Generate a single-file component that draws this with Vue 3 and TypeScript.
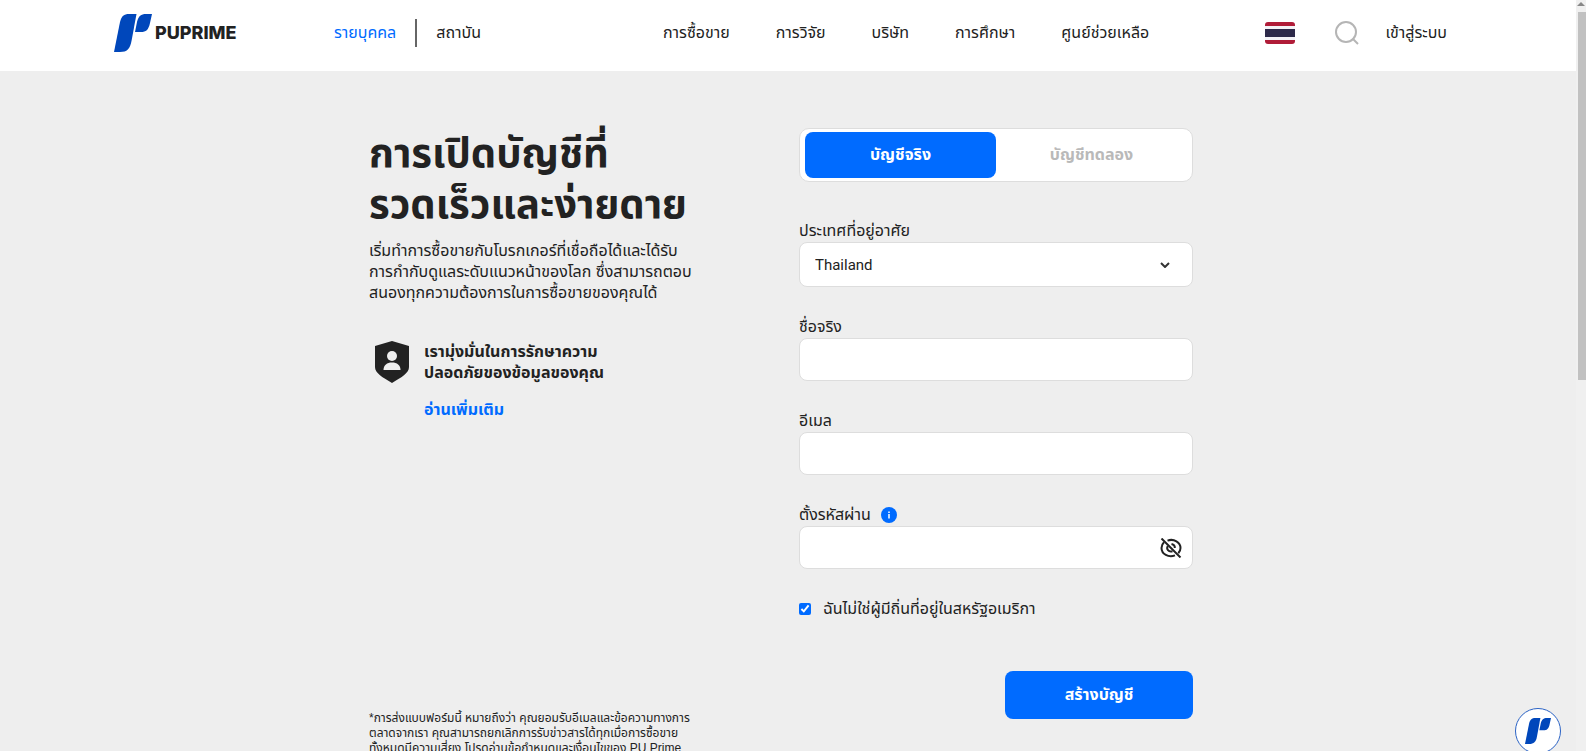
<script setup lang="ts">
import { ref } from 'vue'

const menu: string[] = ['การซื้อขาย', 'การวิจัย', 'บริษัท', 'การศึกษา', 'ศูนย์ช่วยเหลือ']

const account = ref<'live' | 'demo'>('live')
const country = ref('Thailand')
const firstName = ref('')
const email = ref('')
const password = ref('')
const showPassword = ref(false)
const notUsResident = ref(true)
</script>

<template>
  <div class="shell">
    <div class="page">
      <header class="topbar">
        <a class="logo" href="#" aria-label="PUPRIME">
          <svg class="mark" viewBox="0 0 38 38" aria-hidden="true">
            <path d="M15 0H22.500L17.500 27C16 35 13 38 6 38H0L6 8C7.500 2 10 0 15 0Z" />
            <path d="M32 0H38L36 9C34.500 16 32 18 27 18H21L23 8C24.500 2 27 0 32 0Z" />
          </svg>
          <span class="wordmark">PUPRIME</span>
        </a>
        <nav class="segment">
          <a class="current" href="#">รายบุคคล</a>
          <a href="#">สถาบัน</a>
        </nav>
        <nav class="menu">
          <a v-for="item in menu" :key="item" href="#">{{ item }}</a>
        </nav>
        <div class="tools">
          <button class="flag" type="button" aria-label="ไทย"></button>
          <button class="search" type="button" aria-label="ค้นหา">
            <svg viewBox="0 0 24 24" aria-hidden="true">
              <circle cx="11" cy="11" r="10" />
              <path d="M17.500 17.500L23 23" />
            </svg>
          </button>
          <a class="login" href="#">เข้าสู่ระบบ</a>
        </div>
      </header>

      <main class="content">
        <section class="intro">
          <h1>การเปิดบัญชีที่<br />รวดเร็วและง่ายดาย</h1>
          <p class="lead">
            เริ่มทำการซื้อขายกับโบรกเกอร์ที่เชื่อถือได้และได้รับ<br />
            การกำกับดูแลระดับแนวหน้าของโลก ซึ่งสามารถตอบ<br />
            สนองทุกความต้องการในการซื้อขายของคุณได้
          </p>
          <div class="privacy">
            <svg class="shield" viewBox="0 0 34 42" aria-hidden="true">
              <path d="M17 0L34 5V26C34 32 27 36 17 42C7 36 0 32 0 26V5Z" fill="#222" />
              <circle cx="17" cy="15" r="5" fill="#eee" />
              <path d="M8.500 29C8.500 24 12 21.500 17 21.500S25.500 24 25.500 29Z" fill="#eee" />
            </svg>
            <div>
              <p class="pledge">เรามุ่งมั่นในการรักษาความ<br />ปลอดภัยของข้อมูลของคุณ</p>
              <a class="more" href="#">อ่านเพิ่มเติม</a>
            </div>
          </div>
          <p class="note">
            *การส่งแบบฟอร์มนี้ หมายถึงว่า คุณยอมรับอีเมลและข้อความทางการ<br />
            ตลาดจากเรา คุณสามารถยกเลิกการรับข่าวสารได้ทุกเมื่อการซื้อขาย<br />
            ทั้งหมดมีความเสี่ยง โปรดอ่านข้อกำหนดและเงื่อนไขของ PU Prime
          </p>
        </section>

        <form class="signup" @submit.prevent>
          <div class="tabs">
            <button type="button" :class="{ active: account === 'live' }" @click="account = 'live'">บัญชีจริง</button>
            <button type="button" :class="{ active: account === 'demo' }" @click="account = 'demo'">บัญชีทดลอง</button>
          </div>

          <div class="field">
            <label for="country">ประเทศที่อยู่อาศัย</label>
            <div class="control">
              <select id="country" v-model="country">
                <option>Thailand</option>
              </select>
              <svg class="chevron" viewBox="0 0 10 6" aria-hidden="true"><path d="M1 1L5 5L9 1" /></svg>
            </div>
          </div>

          <div class="field">
            <label for="first-name">ชื่อจริง</label>
            <input id="first-name" v-model="firstName" type="text" />
          </div>

          <div class="field">
            <label for="email">อีเมล</label>
            <input id="email" v-model="email" type="email" />
          </div>

          <div class="field">
            <div class="label-row">
              <label for="password">ตั้งรหัสผ่าน</label>
              <svg class="info" viewBox="0 0 16 16" aria-hidden="true">
                <circle cx="8" cy="8" r="8" fill="#006bff" />
                <path d="M8 7V11.500M8 4.500V6" stroke="#fff" stroke-width="1.500" />
              </svg>
            </div>
            <div class="control">
              <input id="password" v-model="password" :type="showPassword ? 'text' : 'password'" />
              <button class="eye" type="button" aria-label="แสดงรหัสผ่าน" @click="showPassword = !showPassword">
                <svg viewBox="0 0 22 20" aria-hidden="true">
                  <path d="M7.500 2.600C14 0.200 20.500 4.500 20.500 10C20.500 12 19.700 13.800 18.300 15.200" />
                  <path d="M4 4.300C2.400 5.800 1.500 7.800 1.500 10C1.500 16 8.500 20 15 17.400" />
                  <path d="M7.800 8C6 11 8.500 14.500 12.500 13.300M11.500 6C13.500 6.500 15 8 14.800 10" />
                  <path d="M1.500 0.500L20.500 19.500" />
                </svg>
              </button>
            </div>
          </div>

          <label class="confirm">
            <input v-model="notUsResident" type="checkbox" />
            <span>ฉันไม่ใช่ผู้มีถิ่นที่อยู่ในสหรัฐอเมริกา</span>
          </label>

          <button class="submit" type="submit">สร้างบัญชี</button>
        </form>
      </main>

      <button class="chat" type="button" aria-label="PU Prime">
        <svg class="mark" viewBox="0 0 38 38" aria-hidden="true">
          <path d="M15 0H22.500L17.500 27C16 35 13 38 6 38H0L6 8C7.500 2 10 0 15 0Z" />
          <path d="M32 0H38L36 9C34.500 16 32 18 27 18H21L23 8C24.500 2 27 0 32 0Z" />
        </svg>
      </button>
    </div>

    <div class="scrollbar" aria-hidden="true">
      <span class="arrow"></span>
      <span class="thumb"></span>
    </div>
  </div>
</template>

<style>
body {
  margin: 0;
  background: #eee;
}
</style>

<style scoped>
.shell {
  display: grid;
  grid-template-columns: 1fr 10px;
  height: 100vh;
  overflow: hidden;
  font: 16px/20px 'Liberation Sans', 'Noto Sans Thai', 'Noto Sans', sans-serif;
  color: #222;
}
.shell *,
.shell *::before {
  box-sizing: border-box;
}
a {
  color: inherit;
  text-decoration: none;
}
button {
  padding: 0;
  border: 0;
  background: none;
  font: inherit;
  color: inherit;
  cursor: pointer;
}
h1,
p {
  margin: 0;
}
.page {
  min-width: 0;
  overflow: hidden;
}
.topbar {
  display: flex;
  align-items: center;
  height: 71px;
  padding: 0 129px 6px 114px;
  background: #fff;
  white-space: nowrap;
}
.logo {
  display: flex;
  align-items: center;
  gap: 3px;
  width: 220px;
}
.mark {
  width: 38px;
  height: 38px;
  fill: #0047bb;
}
.wordmark {
  font: 800 18px/20px Inter, sans-serif;
}
.segment {
  display: flex;
  align-items: center;
  width: 329px;
}
.segment a + a {
  margin-left: 19px;
  padding: 4px 0 4px 19px;
  border-left: 2px solid #666;
}
.current {
  color: #006bff;
}
.menu {
  display: flex;
  gap: 46px;
}
.tools {
  display: flex;
  align-items: center;
  gap: 40px;
  margin-left: auto;
}
.flag {
  width: 30px;
  height: 22px;
  border-radius: 3px;
  background: linear-gradient(#b01c38 0 4px, #f4f3f7 4px 7px, #2d2a4a 7px 15px, #f4f3f7 15px 18px, #b01c38 18px);
}
.search {
  display: flex;
}
.search svg {
  width: 24px;
  height: 24px;
  overflow: visible;
  fill: none;
  stroke: #b5b5b5;
  stroke-width: 2;
}
.login {
  margin-left: -13px;
}
.content {
  display: grid;
  grid-template-columns: 324px 394px;
  justify-content: space-between;
  width: 838px;
  max-width: 100%;
  margin: 0 auto;
  padding: 57px 14px 40px 0;
}
.intro {
  display: flex;
  flex-direction: column;
  white-space: nowrap;
}
h1 {
  font-size: 40px;
  line-height: 51px;
  font-weight: 700;
}
.lead {
  margin-top: 10px;
  line-height: 21px;
}
.privacy {
  display: flex;
  gap: 15px;
  margin-top: 38px;
  padding-left: 6px;
  font-weight: 700;
}
.shield {
  width: 34px;
  height: 42px;
}
.pledge {
  line-height: 21px;
}
.more {
  display: block;
  margin-top: 17px;
  color: #006bff;
}
.note {
  margin-top: 291px;
  font-size: 12px;
  line-height: 15px;
}
.signup {
  display: flex;
  flex-direction: column;
}
.tabs {
  display: grid;
  grid-template-columns: 1fr 1fr;
  height: 54px;
  padding: 3px 5px;
  border: 1px solid #ddd;
  border-radius: 10px;
  background: #fff;
}
.tabs button {
  border-radius: 8px;
  color: #b9b9b9;
  font-weight: 700;
}
.tabs .active {
  background: #006bff;
  color: #fff;
}
.field {
  margin-top: 29px;
}
.tabs + .field {
  margin-top: 38px;
}
.field label {
  display: block;
  line-height: 22px;
}
.label-row {
  display: flex;
  align-items: center;
  gap: 10px;
}
.info {
  width: 16px;
  height: 16px;
}
.control {
  display: grid;
  align-items: center;
}
.control > * {
  grid-area: 1 / 1;
}
.field input,
.field select {
  display: block;
  width: 100%;
  height: 43px;
  padding: 0 15px;
  border: 1px solid #ddd;
  border-radius: 8px;
  background: #fff;
  color: #222;
  font: 15px/20px Roboto, sans-serif;
  appearance: none;
}
.field select {
  height: 45px;
}
.chevron {
  justify-self: end;
  width: 10px;
  height: 6px;
  margin-right: 23px;
  fill: none;
  stroke: #333;
  stroke-width: 2;
  pointer-events: none;
}
.eye {
  display: flex;
  justify-self: end;
  margin-right: 11px;
}
.eye svg {
  width: 22px;
  height: 20px;
  fill: none;
  stroke: #222;
  stroke-width: 2;
}
.confirm {
  display: flex;
  align-items: center;
  gap: 12px;
  margin-top: 30px;
}
.confirm input {
  width: 12px;
  height: 12px;
  margin: 0;
  accent-color: #006bff;
}
.submit {
  align-self: flex-end;
  width: 188px;
  height: 48px;
  margin-top: 52px;
  border-radius: 8px;
  background: #006bff;
  color: #fff;
  font-weight: 700;
}
.chat {
  position: fixed;
  right: 25px;
  bottom: -3px;
  display: flex;
  align-items: center;
  justify-content: center;
  width: 46px;
  height: 46px;
  border: 1px solid #2a62c4;
  border-radius: 50%;
  background: #fff;
}
.chat .mark {
  width: 26px;
  height: 26px;
}
.scrollbar {
  display: flex;
  flex-direction: column;
  align-items: flex-end;
  background: #f0f0f0;
}
.arrow {
  margin: 2px 1px 6px 0;
  border: 4px solid transparent;
  border-top: 0;
  border-bottom-color: #888;
}
.thumb {
  width: 8px;
  height: 49vh;
  background: #c1c1c1;
}
</style>
